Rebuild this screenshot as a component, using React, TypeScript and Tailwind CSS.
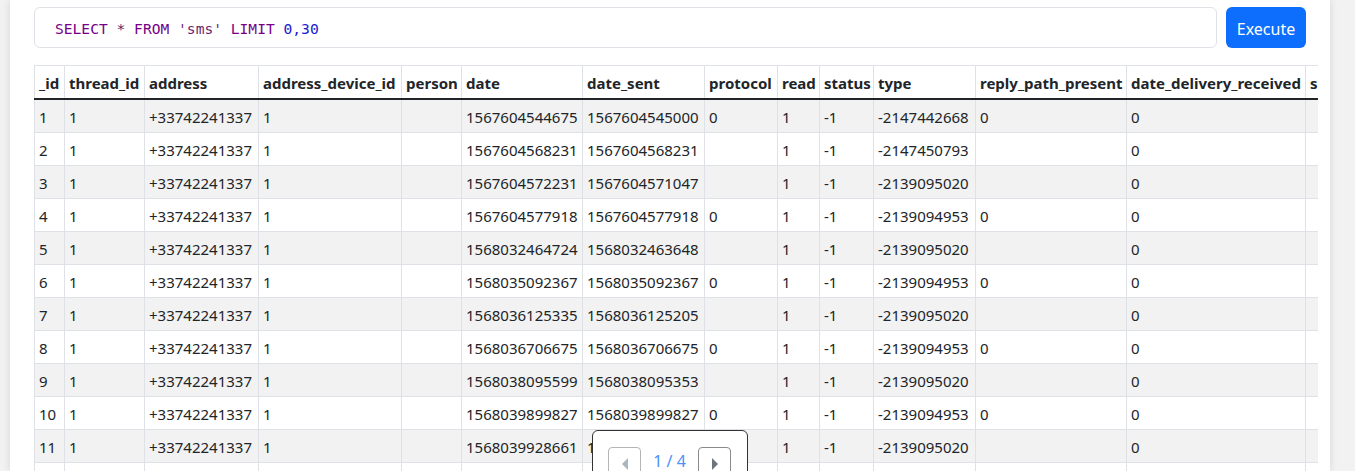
import React from "react";

const cols = [
  { name: "_id", w: "w-[30px]" },
  { name: "thread_id", w: "w-[80px]" },
  { name: "address", w: "w-[114px]" },
  { name: "address_device_id", w: "w-[143px]" },
  { name: "person", w: "w-[60px]" },
  { name: "date", w: "w-[121px]" },
  { name: "date_sent", w: "w-[122px]" },
  { name: "protocol", w: "w-[73px]" },
  { name: "read", w: "w-[42px]" },
  { name: "status", w: "w-[54px]" },
  { name: "type", w: "w-[102px]" },
  { name: "reply_path_present", w: "w-[151px]" },
  { name: "date_delivery_received", w: "w-[179px]" },
  { name: "subject", w: "w-[80px]" },
];

type Row = [string, string, string, string, string, string, string];
const rows: Row[] = [
  ["1", "1567604544675", "1567604545000", "0", "-2147442668", "0", "0"],
  ["2", "1567604568231", "1567604568231", "", "-2147450793", "", "0"],
  ["3", "1567604572231", "1567604571047", "", "-2139095020", "", "0"],
  ["4", "1567604577918", "1567604577918", "0", "-2139094953", "0", "0"],
  ["5", "1568032464724", "1568032463648", "", "-2139095020", "", "0"],
  ["6", "1568035092367", "1568035092367", "0", "-2139094953", "0", "0"],
  ["7", "1568036125335", "1568036125205", "", "-2139095020", "", "0"],
  ["8", "1568036706675", "1568036706675", "0", "-2139094953", "0", "0"],
  ["9", "1568038095599", "1568038095353", "", "-2139095020", "", "0"],
  ["10", "1568039899827", "1568039899827", "0", "-2139094953", "0", "0"],
  ["11", "1568039928661", "1568039928661", "", "-2139095020", "", "0"],
  ["12", "1568040003511", "1568040003511", "0", "-2139094953", "0", "0"],
];

export default function App() {
  return (
    <div className="w-[1355px] h-[471px] overflow-hidden bg-[#f2f2f2] relative" style={{ fontFamily: '"Noto Sans", sans-serif' }}>
      <div className="ml-[10px] w-[1320px] h-[471px] bg-white shadow-[0_0_8px_rgba(0,0,0,0.12)] pl-[24px] pt-[7px]">
        <div className="flex gap-[9px] w-[1272px]">
          <div className="flex-1 h-[41px] border border-[#dee2e6] rounded-[6px] flex items-center pl-[20px] pt-[2px] text-[14.6px] text-[#770088]" style={{ fontFamily: '"DejaVu Sans Mono", monospace' }}>
            <span className="whitespace-pre">
              <span className="text-[#770088]">SELECT</span>{" "}
              <span className="text-[#5c2a6c]">*</span>{" "}
              <span className="text-[#770088]">FROM</span>{" "}
              <span className="text-[#6a1f6f]">'sms'</span>{" "}
              <span className="text-[#770088]">LIMIT</span>{" "}
              <span className="text-[#1a1ad0]">0,30</span>
            </span>
          </div>
          <button className="w-[80px] h-[41px] bg-[#0d6efd] text-white rounded-[6px] text-[16px] flex items-center justify-center pt-[2px]">
            Execute
          </button>
        </div>
        <div className="mt-[17px] w-[1284px] overflow-hidden">
          <table className="table-fixed border-collapse text-[15px] leading-[24px] text-[#212529] w-[1351px]">
            <colgroup>
              {cols.map((c) => (
                <col key={c.name} className={c.w} />
              ))}
            </colgroup>
            <thead>
              <tr>
                {cols.map((c) => (
                  <th key={c.name} className="text-left font-bold px-[4px] pt-[5px] pb-[3px] border border-[#dee2e6] border-b-2 border-b-[#212529] whitespace-nowrap overflow-hidden">
                    {c.name}
                  </th>
                ))}
              </tr>
            </thead>
            <tbody>
              {rows.map((r, i) => {
                const cells = [r[0], "1", "+33742241337", "1", "", r[1], r[2], r[3], "1", "-1", r[4], r[5], r[6], ""];
                return (
                  <tr key={r[0]} className={i % 2 === 0 ? "bg-[#f2f2f2]" : "bg-white"}>
                    {cells.map((v, j) => (
                      <td key={j} className="px-[4px] pt-[5px] pb-[3px] border border-[#dee2e6] whitespace-nowrap overflow-hidden">
                        {v}
                      </td>
                    ))}
                  </tr>
                );
              })}
            </tbody>
          </table>
        </div>
      </div>
      <div className="absolute left-[592px] top-[430px] w-[156px] h-[60px] bg-white border border-[#333] rounded-t-[6px] flex items-start pt-[16px] pl-[15px] gap-[12px]">
        <button className="w-[33px] h-[33px] border border-[#b5b5b5] rounded-[4px] flex items-center justify-center">
          <svg width="10" height="14" viewBox="0 0 10 14"><path d="M8 1 L2 7 L8 13 Z" fill="#adb5bd" /></svg>
        </button>
        <span className="text-[#4d8ffd] text-[16px] leading-[29px] w-[33px] text-center whitespace-nowrap">1 / 4</span>
        <button className="w-[33px] h-[33px] border border-[#8a8a8a] rounded-[4px] flex items-center justify-center">
          <svg width="10" height="14" viewBox="0 0 10 14"><path d="M2 1 L8 7 L2 13 Z" fill="#6c757d" /></svg>
        </button>
      </div>
    </div>
  );
}
